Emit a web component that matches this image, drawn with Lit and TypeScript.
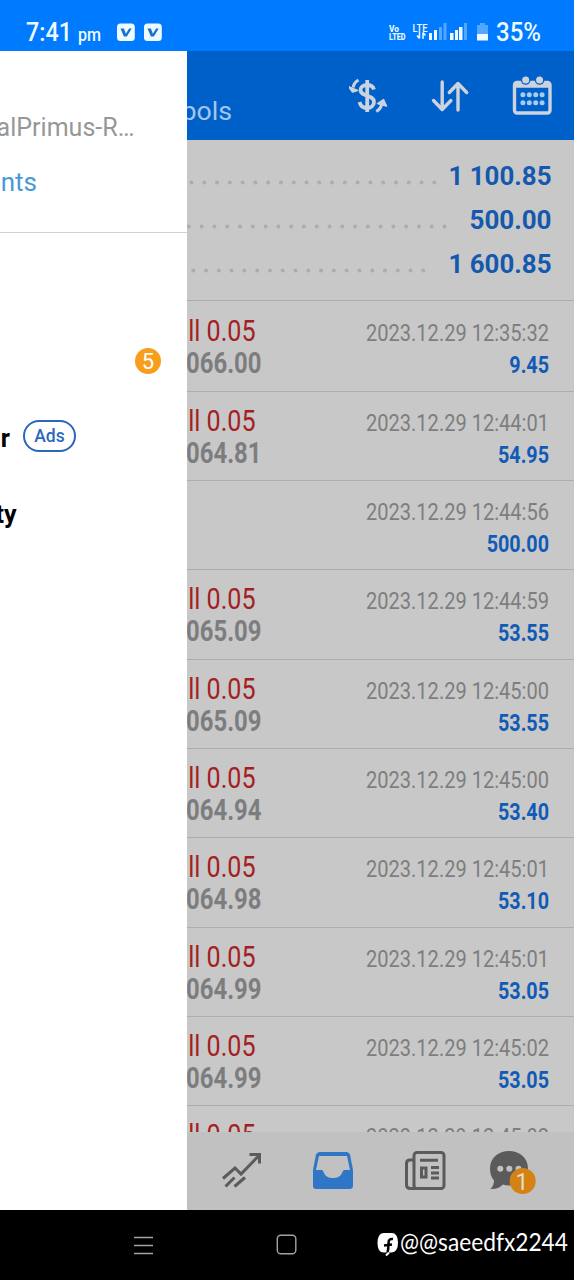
import { LitElement, html, svg, css, nothing } from "lit";
import { customElement } from "lit/decorators.js";

interface Deal {
  volume?: string;
  price?: string;
  time: string;
  profit: string;
}

const DEALS: Deal[] = [
  { volume: "0.05", price: "066.00", time: "2023.12.29 12:35:32", profit: "9.45" },
  { volume: "0.05", price: "064.81", time: "2023.12.29 12:44:01", profit: "54.95" },
  { time: "2023.12.29 12:44:56", profit: "500.00" },
  { volume: "0.05", price: "065.09", time: "2023.12.29 12:44:59", profit: "53.55" },
  { volume: "0.05", price: "065.09", time: "2023.12.29 12:45:00", profit: "53.55" },
  { volume: "0.05", price: "064.94", time: "2023.12.29 12:45:00", profit: "53.40" },
  { volume: "0.05", price: "064.98", time: "2023.12.29 12:45:01", profit: "53.10" },
  { volume: "0.05", price: "064.99", time: "2023.12.29 12:45:01", profit: "53.05" },
  { volume: "0.05", price: "064.99", time: "2023.12.29 12:45:02", profit: "53.05" },
  { volume: "0.05", time: "2023.12.29 12:45:02", profit: "" },
];

const TOTALS = [
  { value: "1 100.85", length: 103, dots: 20, end: 434.3 },
  { value: "500.00", length: 82, dots: 21, end: 444.5 },
  { value: "1 600.85", length: 103, dots: 19, end: 423.3 },
];

// One line of text squeezed to `length`, right aligned in a box of w x h.
const label = (text: string, cls: string, w: number, h: number, base: number, length?: number) => html`
  <svg class="label" width=${w} height=${h}>
    <text class=${cls} x=${w} y=${base} text-anchor="end" textLength=${length ?? nothing} lengthAdjust="spacingAndGlyphs">${text}</text>
  </svg>
`;

// Digits are 11.35 wide and the dot 5.6 in the profit column.
const profitLength = (text: string) => (text.length - 1) * 11.35 + 5.6;

@customElement("app-root")
export class AppRoot extends LitElement {
  static styles = css`
    :host {
      display: block;
      width: 574px;
      height: 1280px;
      overflow: hidden;
      background: #000;
      font-family: Roboto, "Liberation Sans", sans-serif;
    }

    svg {
      display: block;
      flex: none;
    }

    .label {
      overflow: visible;
    }

    .status {
      display: flex;
      height: 51px;
      background: #007bff;
      fill: #eefaff;
    }

    .spacer {
      flex: 1;
    }

    .clock {
      font-size: 25px;
      font-weight: 500;
    }

    .ampm {
      font-size: 19px;
      font-weight: 500;
    }

    .apps {
      margin-left: 15px;
    }

    .network {
      margin-right: 7px;
    }

    .tiny {
      font-size: 9.5px;
      font-weight: 800;
    }

    .lte {
      font-size: 10px;
      font-weight: 500;
    }

    .screen {
      display: grid;
      grid-template-columns: 187px 1fr;
      height: 1159px;
    }

    .drawer {
      background: #fff;
      overflow: hidden;
    }

    .account {
      border-bottom: 1px solid #d2d2d2;
      margin-bottom: 80px;
    }

    .server {
      font-size: 25.5px;
      fill: #979797;
    }

    .link {
      font-size: 26px;
      fill: #4a98d5;
    }

    .item {
      display: flex;
      align-items: center;
      height: 54px;
      gap: 13px;
    }

    .item.mail {
      height: 96px;
      justify-content: flex-end;
      padding-right: 26px;
      box-sizing: border-box;
    }

    .name {
      font-size: 25px;
      font-weight: 700;
      fill: #000;
    }

    .count {
      width: 26px;
      height: 26px;
      border-radius: 50%;
      background: #f99d1c;
      color: #fff;
      font-size: 22px;
      line-height: 28px;
      text-align: center;
    }

    .ads {
      width: 53px;
      height: 32px;
      box-sizing: border-box;
      border: 2px solid #2a67bd;
      border-radius: 16px;
      color: #2a67bd;
      font-size: 17.5px;
      font-weight: 500;
      line-height: 29px;
      text-align: center;
    }

    .main {
      display: flex;
      flex-direction: column;
      min-width: 0;
      height: 1159px;
      overflow: hidden;
      background: #c8c8c8;
    }

    .header {
      display: flex;
      flex: none;
      height: 89px;
      background: #0060c9;
      color: #cdd3de;
    }

    .tab {
      font-size: 26.5px;
      fill: #a3c6ec;
    }

    .totals {
      flex: none;
      height: 161px;
      box-sizing: border-box;
      padding-top: 14px;
      border-bottom: 1px solid #adadad;
    }

    .total {
      display: flex;
      height: 44px;
    }

    .dots {
      stroke: #acacac;
      stroke-width: 4;
      stroke-linecap: round;
      stroke-dasharray: 0 12.78;
    }

    .sum {
      font-size: 25px;
      font-weight: 700;
      fill: #1459ae;
    }

    .list {
      flex: 1;
      min-height: 0;
      overflow: hidden;
      padding-top: 1.2px;
    }

    .row {
      display: flex;
      justify-content: space-between;
      box-sizing: border-box;
      height: 89.35px;
      padding-right: 25px;
      border-bottom: 1px solid #adadad;
    }

    .sell {
      font-size: 28.6px;
      fill: #a41e22;
    }

    .price {
      font-size: 28.6px;
      font-weight: 700;
      fill: #7d7d7f;
    }

    .time {
      font-size: 23.4px;
      fill: #7e7e7e;
    }

    .profit {
      font-size: 24px;
      font-weight: 700;
      fill: #115bb7;
    }

    .nav {
      display: flex;
      flex: none;
      height: 78px;
      background: #c1c1c1;
      color: #5b5b5b;
    }

    .chat-count {
      font-size: 23px;
      fill: #e6dccb;
    }

    .system {
      display: flex;
      height: 70px;
    }

    .handle {
      font-family: Lato, "Open Sans", sans-serif;
      font-size: 24.5px;
      fill: #fff;
    }
  `;

  private renderStatus() {
    const app = (x: number) => svg`
      <rect x=${x} y="23.5" width="17.8" height="17.5" rx="3.5" />
      <path d="M${x + 3.5} 28.5h3.4l2 5.2 3.2-5.2h2.6l-4.8 8h-3z" fill="#1672cf" />
    `;
    return html`
      <div class="status">
        ${label("7:41", "clock", 72, 51, 41, 46)}
        ${label("pm", "ampm", 29, 51, 41, 23)}
        <svg class="apps" width="47" height="51">${app(1)}${app(28)}</svg>
        <div class="spacer"></div>
        <svg class="network" width="100" height="51">
          <text class="tiny" x="0" y="32" textLength="10" lengthAdjust="spacingAndGlyphs">Vo</text>
          <text class="tiny" x="0" y="39.5" textLength="16.5" lengthAdjust="spacingAndGlyphs">LTED</text>
          <text class="lte" x="23.5" y="31.5" textLength="15" lengthAdjust="spacingAndGlyphs">LTE</text>
          <path d="M30.5 32v6.5M28 35.5l2.5 3M34 39v-6.500M34 32.500l2.500 3" fill="none" stroke="#eefaff" stroke-width="1.5" />
          <path d="M40 33h3v7h-3zM45 30h3v10h-3zM61 33h3.500v7h-3.500zM66 30h3v10h-3zM70 27h3.500v13h-3.500z" />
          <path d="M50 27h3v13h-3zM54.500 23h3v17h-3zM75 23h3v17h-3z" opacity=".35" />
          <path d="M91 23h5v2h3v9H88v-9h3z" opacity=".35" />
          <path d="M88 34h11v6.500H88z" />
        </svg>
        ${label("35%", "clock", 45, 51, 41, 45)}
        <svg width="33" height="51"></svg>
      </div>
    `;
  }

  private renderDrawer() {
    return html`
      <div class="drawer">
        <div class="account">
          ${label("alPrimus-R…", "server", 134.5, 97, 85, 138)}
          ${label("nts", "link", 37, 84, 43)}
        </div>
        <div class="item mail"><div class="count">5</div></div>
        <div class="item">
          ${label("r", "name", 10, 54, 37.5)}
          <div class="ads">Ads</div>
        </div>
        ${label("ty", "name", 16.5, 100, 60)}
      </div>
    `;
  }

  private renderHeader() {
    return html`
      <div class="header">
        ${label("bols", "tab", 45, 89, 69, 50.5)}
        <div class="spacer"></div>
        <svg width="225.500" height="89" fill="none" stroke="currentColor" stroke-width="3.4">
          <!-- currency exchange -->
          <path d="M25 38.500c-1-3.500-4-4.500-7-4.500-4 0-6.500 2-6.500 5 0 7 13.500 4.500 13.500 12 0 4-3.500 6-7 6-4 0-6.500-2-7.500-6M18.200 29v32" stroke-width="3.800" />
          <path d="M9.500 29c-3 1.800-5 4.500-5.300 7.500M27.300 60.500c3-1.800 5-4.500 5.300-7.500" stroke-width="3" />
          <path d="M-.5 35.500l4 5.500 5-1.500zM28.500 52.500l6-4 3 6.500z" fill="currentColor" stroke-width="1.500" stroke-linejoin="round" />
          <!-- sort order -->
          <path d="M93.200 31v27M84.500 49.500l8.700 9 8.700-9M109 59V33M100.300 41.500l8.700-9 8.700 9" stroke-linecap="round" stroke-linejoin="round" />
          <!-- calendar -->
          <path d="M168 31.500h30.500a2.500 2.500 0 0 1 2.500 2.500v25.500a2.500 2.500 0 0 1-2.500 2.500H168a2.500 2.500 0 0 1-2.500-2.500V34a2.500 2.500 0 0 1 2.500-2.500zM166 35h35" />
          <circle cx="176.700" cy="29" r="4.200" fill="currentColor" stroke="#0060c9" stroke-width="1.300" />
          <circle cx="190.600" cy="29" r="4.200" fill="currentColor" stroke="#0060c9" stroke-width="1.300" />
          ${[43.8, 51.8].map((y) =>
            [173.9, 180.3, 186.7, 193.1].map(
              (x) => svg`<circle cx=${x} cy=${y} r="2.500" fill="#a9cbed" stroke="none" />`
            )
          )}
        </svg>
      </div>
    `;
  }

  private renderRow(deal: Deal) {
    return html`
      <div class="row">
        <div>
          ${deal.volume ? label(`ll ${deal.volume}`, "sell", 68.5, 48, 39.2, 67.3) : nothing}
          ${deal.price ? label(deal.price, "price", 74.5, 40, 23, 75.5) : nothing}
        </div>
        <div>
          ${label(deal.time, "time", 184, 48, 39, 183)}
          ${deal.profit ? label(deal.profit, "profit", 184, 40, 22.8, profitLength(deal.profit)) : nothing}
        </div>
      </div>
    `;
  }

  private renderNav() {
    return html`
      <div class="nav">
        <svg width="387" height="78" fill="none" stroke="currentColor" stroke-width="3">
          <!-- trade -->
          <path d="M36 46.500l12-10.500 6 6L71 24.500M62.500 22.500h10v9M38.500 54.500l9-9M47.500 54.500l10.500-9" />
          <!-- history -->
          <path d="M133 21h27q2.500 0 3.500 2.500l3 15.500v15.500q0 3.500-3.500 3.500h-33.500q-3 0-3-3V39l3-15.500q1-2.500 3.500-2.500z" fill="#2f76c6" stroke="none" transform="translate(-.5 -1)" />
          <path d="M132 24h28l3 14h-5.500q-1.500 0-2 2-2 6-9.500 6t-9.500-6q-.5-2-2-2H129z" fill="#c1c1c1" stroke="none" />
          <!-- news -->
          <rect x="227" y="20.500" width="30" height="36" rx="3" />
          <path d="M227 28h-4q-3.500 0-3.500 3.500V53q0 3.500 4 3.500h6M233 28.300h18M244 35.500h8M244 41h8M244 46h8" />
          <rect x="234.500" y="36" width="4.500" height="9" />
          <!-- messages -->
          <path d="M322.500 19c10.500 0 19 7 19 17.500S333 53.500 322.500 53.500q-3.500 0-6-1-5 5-12.500 4.500 3.500-3.500 3.500-8.500-4-4.500-4-12C303.500 26 312 19 322.500 19z" fill="currentColor" stroke="none" transform="translate(-.5 0)" />
          <g fill="#c1c1c1" stroke="none">
            <circle cx="313.300" cy="36.800" r="3" />
            <circle cx="322.300" cy="36.800" r="3" />
            <circle cx="331.500" cy="36.800" r="3" />
          </g>
          <circle cx="335.700" cy="49" r="13" fill="#d38213" stroke="none" />
          <text class="chat-count" x="335" y="57.500" text-anchor="middle" stroke="none">1</text>
        </svg>
      </div>
    `;
  }

  private renderSystem() {
    return html`
      <div class="system">
        <svg width="400" height="70" fill="none" stroke="#a3a3a3" stroke-width="1.400">
          <path d="M134 27.500h19M134 35.500h19M134 43.500h19" />
          <rect x="277.300" y="25.300" width="18.500" height="18.500" rx="3.500" />
          <path d="M383.500 23h8q6.500 0 6.500 9.500t-6.500 10h-8q-6 0-6-9.500t6-10z" fill="#fff" stroke="none" />
          <path d="M387.500 43c1-4 1-7 1-10 0-3 1.500-4.500 4.500-4M384 35.500l8-1" stroke="#000" stroke-width="2.500" />
          <path d="M386 45.500l3-3" stroke="#fff" stroke-width="2" />
        </svg>
        ${label("@@saeedfx2244", "handle", 168, 70, 40.5, 168)}
      </div>
    `;
  }

  render() {
    return html`
      ${this.renderStatus()}
      <div class="screen">
        ${this.renderDrawer()}
        <div class="main">
          ${this.renderHeader()}
          <div class="totals">
            ${TOTALS.map(
              (t) => html`
                <div class="total">
                  <svg width="262" height="44">
                    <path class="dots" d="M${t.end - 187} 28.500h${-(t.dots - 1) * 12.78 - 0.2}" />
                  </svg>
                  ${label(t.value, "sum", 102.5, 44, 31, t.length)}
                </div>
              `
            )}
          </div>
          <div class="list">${DEALS.map((deal) => this.renderRow(deal))}</div>
          ${this.renderNav()}
        </div>
      </div>
      ${this.renderSystem()}
    `;
  }
}

declare global {
  interface HTMLElementTagNameMap {
    "app-root": AppRoot;
  }
}
